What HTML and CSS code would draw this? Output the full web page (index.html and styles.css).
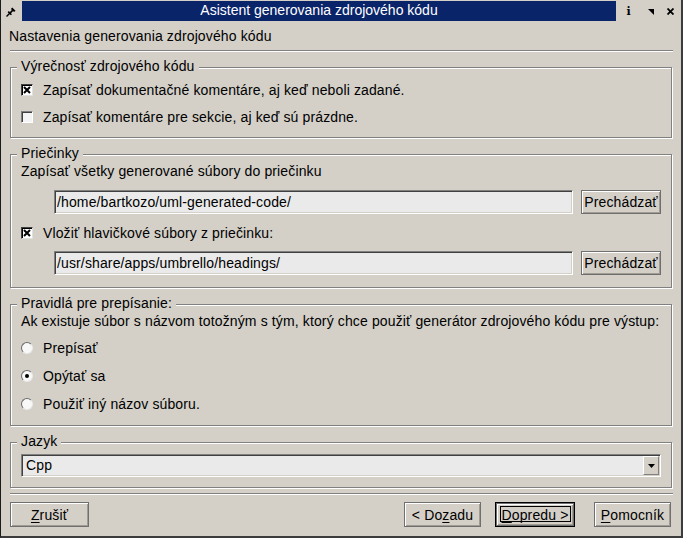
FILE: index.html
```html
<!DOCTYPE html>
<html lang="sk">
<head>
<meta charset="utf-8">
<title>Asistent generovania zdrojového kódu</title>
<link rel="stylesheet" href="styles.css">
</head>
<body>
<div class="window">
  <div class="titlebar">
    <span class="tb-slot tb-pin">
      <svg width="10" height="10" viewBox="0 0 10 10"><path d="M0.5 9.5 L4 6" stroke="#000" stroke-width="1.4"/><path d="M2.2 4.6 L5.4 7.8" stroke="#000" stroke-width="1.6"/><path d="M3.6 5.2 L6.4 2.4 L7.6 3.6 L4.8 6.4 Z" fill="#000"/><path d="M5.6 1.2 L8.8 4.4" stroke="#000" stroke-width="2"/></svg>
    </span>
    <div class="caption">Asistent generovania zdrojového kódu</div>
    <span class="tb-slot tb-info">i</span>
    <span class="tb-slot tb-above">
      <svg width="6" height="6" viewBox="0 0 6 6"><path d="M0 0 H6 V6 Z" fill="#000"/></svg>
    </span>
    <span class="tb-slot tb-close">
      <svg width="7" height="7" viewBox="0 0 7 7"><path d="M0.5 0.5 L6.5 6.5 M6.5 0.5 L0.5 6.5" stroke="#000" stroke-width="1.8"/></svg>
    </span>
  </div>

  <div class="client">
    <div class="page-title">Nastavenia generovania zdrojového kódu</div>
    <div class="sep"></div>

    <fieldset class="group g1">
      <legend>Výrečnosť zdrojového kódu</legend>
      <div class="check-row">
        <span class="check on"><svg width="8" height="8" viewBox="0 0 8 8"><path d="M1 1 L7 7 M7 1 L1 7" stroke="#000" stroke-width="2"/></svg></span>
        <span>Zapísať dokumentačné komentáre, aj keď neboli zadané.</span>
      </div>
      <div class="check-row">
        <span class="check"></span>
        <span>Zapísať komentáre pre sekcie, aj keď sú prázdne.</span>
      </div>
    </fieldset>

    <fieldset class="group g2">
      <legend>Priečinky</legend>
      <div class="label">Zapísať všetky generované súbory do priečinku</div>
      <div class="path-row first">
        <input class="field" type="text" value="/home/bartkozo/uml-generated-code/">
        <button class="btn browse" type="button">Prechádzať</button>
      </div>
      <div class="check-row">
        <span class="check on"><svg width="8" height="8" viewBox="0 0 8 8"><path d="M1 1 L7 7 M7 1 L1 7" stroke="#000" stroke-width="2"/></svg></span>
        <span>Vložiť hlavičkové súbory z priečinku:</span>
      </div>
      <div class="path-row">
        <input class="field" type="text" value="/usr/share/apps/umbrello/headings/">
        <button class="btn browse" type="button">Prechádzať</button>
      </div>
    </fieldset>

    <fieldset class="group g3">
      <legend>Pravidlá pre prepísanie:</legend>
      <div class="label">Ak existuje súbor s názvom totožným s tým, ktorý chce použiť generátor zdrojového kódu pre výstup:</div>
      <div class="radios">
        <div class="radio-row"><span class="radio"></span><span>Prepísať</span></div>
        <div class="radio-row"><span class="radio"><span class="dot"></span></span><span>Opýtať sa</span></div>
        <div class="radio-row"><span class="radio"></span><span>Použiť iný názov súboru.</span></div>
      </div>
    </fieldset>

    <fieldset class="group g4">
      <legend>Jazyk</legend>
      <div class="combo">
        <span class="combo-value">Cpp</span>
        <span class="combo-arrow"><svg width="7" height="4" viewBox="0 0 7 4"><path d="M0 0 H7 L3.5 4 Z" fill="#000"/></svg></span>
      </div>
    </fieldset>

    <div class="sep bottom"></div>

    <div class="buttons">
      <button class="btn cancel" type="button"><u>Z</u>rušiť</button>
      <button class="btn back" type="button">&lt; Do<u>z</u>adu</button>
      <button class="btn next default" type="button"><u>D</u>opredu &gt;</button>
      <button class="btn help" type="button"><u>P</u>omocník</button>
    </div>
  </div>
</div>
</body>
</html>
```
FILE: styles.css
```css
* { box-sizing: border-box; }

html, body {
  margin: 0;
  padding: 0;
}

body {
  background: #d4d0c8;
  font-family: "Liberation Sans", Arial, sans-serif;
  font-size: 14px;
  letter-spacing: 0.13px;
  color: #000;
}

.window {
  width: 683px;
  height: 538px;
  background: #d4d0c8;
  border-left: 1px solid #1c1c1c;
  border-right: 2px solid #3c3c3c;
  border-bottom: 2px solid #3c3c3c;
  padding-left: 1px;
  display: flex;
  flex-direction: column;
  overflow: hidden;
}

/* ---------- title bar ---------- */
.titlebar {
  display: flex;
  height: 22px;
  flex: none;
}

.tb-slot {
  display: flex;
  align-items: center;
  justify-content: center;
  padding-top: 1px;
}

.tb-pin {
  width: 20px;
  justify-content: flex-start;
  align-items: flex-start;
  padding: 7px 0 0 4px;
}

.caption {
  flex: 1;
  margin-top: 1px;
  height: 20px;
  background: #0a246a;
  color: #fff;
  text-align: center;
  line-height: 18px;
  font-size: 14px;
  letter-spacing: 0;
  white-space: nowrap;
}

.tb-info {
  width: 25px;
  font-family: "DejaVu Serif", "Liberation Serif", serif;
  font-weight: bold;
  font-size: 11px;
  line-height: 11px;
  letter-spacing: 0;
}

.tb-above { width: 19px; }
.tb-close { width: 21px; }

/* ---------- client area ---------- */
.client {
  flex: 1;
  display: flex;
  flex-direction: column;
  padding: 0 8px;
}

.page-title {
  padding-top: 6px;
  line-height: 16px;
  margin-left: -1px;
}

.sep {
  height: 2px;
  margin-top: 6px;
  border-top: 1px solid #808080;
  border-bottom: 1px solid #fff;
}

.sep.bottom { margin-top: 5px; }

/* ---------- group boxes ---------- */
.group {
  margin: 7px 1px 0 0;
  padding: 0 10px;
  min-width: 0;
  border: 1px solid #808080;
  box-shadow: 1px 1px 0 #fff, inset 1px 1px 0 #fff;
}

.group legend {
  padding: 0 4px 2px 4px;
  margin-left: -4px;
  line-height: 16px;
  background: #d4d0c8;
}

.g1 { margin-top: 6px; padding-bottom: 7px; }
.g2 { padding-bottom: 12px; }
.g3 { padding-bottom: 7px; }
.g4 { padding-bottom: 10px; }

.label {
  line-height: 16px;
  white-space: nowrap;
}

.check-row,
.radio-row {
  display: flex;
  align-items: center;
  gap: 10px;
  height: 27px;
  line-height: 16px;
  white-space: nowrap;
}

.radio-row { height: 28px; }

.g2 .check-row { margin-top: 5px; }

.radios { margin-top: 5px; }

.check {
  width: 12px;
  height: 12px;
  flex: none;
  display: flex;
  align-items: center;
  justify-content: center;
  background: #f4f4f4;
  border: 1px solid;
  border-color: #808080 #fff #fff #808080;
  box-shadow: inset 1px 1px 0 #404040;
}

.check.on {
  background: #fff;
  border-color: #404040 #e0e0e0 #e0e0e0 #404040;
  box-shadow: inset 1px 1px 0 #000;
}

.radio {
  width: 12px;
  height: 12px;
  flex: none;
  border-radius: 50%;
  display: flex;
  align-items: center;
  justify-content: center;
  background: #f8f8f8;
  border: 1px solid;
  border-color: #6a6a6a #e8e8e8 #e8e8e8 #6a6a6a;
}

.radio .dot {
  width: 4px;
  height: 4px;
  border-radius: 50%;
  background: #000;
}

/* ---------- path rows ---------- */
.path-row {
  display: flex;
  gap: 8px;
  height: 24px;
  margin-left: 33px;
  margin-top: 5px;
}

.path-row.first { margin-top: 11px; }

.field {
  flex: 1;
  min-width: 0;
  height: 24px;
  margin: 0;
  padding: 0 2px;
  font-family: "Liberation Sans", Arial, sans-serif;
  font-size: 14px;
  letter-spacing: 0.13px;
  color: #000;
  background: #eaeaea;
  border: 1px solid;
  border-color: #808080 #fff #fff #808080;
  box-shadow: inset 1px 1px 0 #404040, inset -1px -1px 0 #d4d0c8;
  outline: none;
  -webkit-appearance: none;
  appearance: none;
  border-radius: 0;
}

/* ---------- buttons ---------- */
.btn {
  height: 25px;
  margin: 0;
  padding: 0;
  font-family: "Liberation Sans", Arial, sans-serif;
  font-size: 14px;
  letter-spacing: 0.13px;
  color: #000;
  background: #d4d0c8;
  border: 1px solid #6f6f6f;
  box-shadow: inset 1px 1px 0 #fff, inset -1px -1px 0 #a09c94;
  border-radius: 0;
  -webkit-appearance: none;
  appearance: none;
  white-space: nowrap;
}

.btn u { text-decoration-thickness: 1px; text-underline-offset: 2px; }

.btn.browse {
  width: 80px;
  height: 24px;
}

.buttons {
  display: flex;
  height: 25px;
  margin-top: 7px;
  padding-right: 2px;
}

.cancel { width: 79px; margin-right: auto; }
.back { width: 77px; margin-right: 14px; }
.next { width: 80px; margin-right: 19px; }
.help { width: 77px; }

.btn.default {
  position: relative;
  border: 1px solid #000;
  box-shadow: inset 0 0 0 1px #6f6f6f, inset 2px 2px 0 #fff, inset -2px -2px 0 #a09c94;
}

.btn.default::after {
  content: "";
  position: absolute;
  left: 4px;
  right: 3px;
  top: 3px;
  bottom: 4px;
  border: 1px solid #000;
}

/* ---------- combo ---------- */
.combo {
  display: flex;
  height: 23px;
  margin-top: 3px;
  background: #eaeaea;
  border: 1px solid;
  border-color: #808080 #fff #fff #808080;
  box-shadow: inset 1px 1px 0 #404040, inset -1px -1px 0 #d4d0c8;
  padding: 1px;
}

.combo-value {
  flex: 1;
  padding-left: 3px;
  line-height: 19px;
}

.combo-arrow {
  width: 16px;
  display: flex;
  align-items: center;
  justify-content: center;
  background: #d4d0c8;
  border: 1px solid;
  border-color: #fff #808080 #808080 #fff;
}
```
